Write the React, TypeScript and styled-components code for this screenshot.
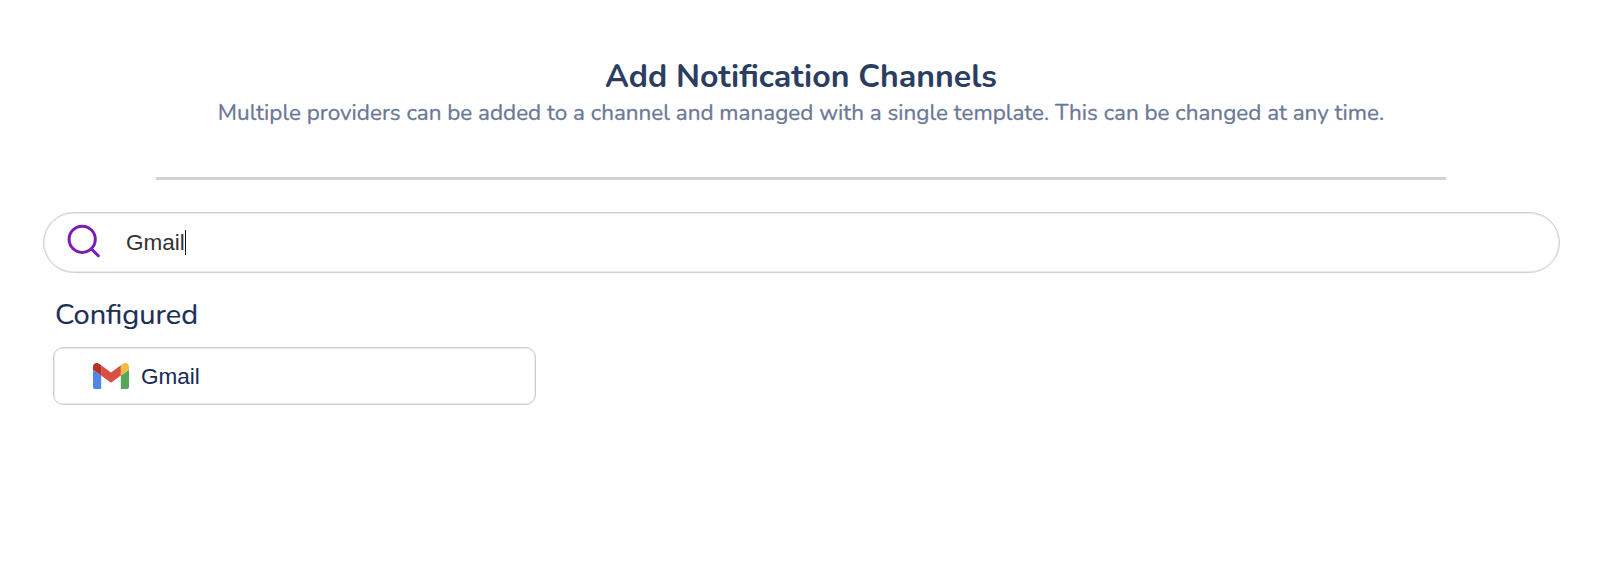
import React from "react";
import styled, { createGlobalStyle } from "styled-components";

const GlobalStyle = createGlobalStyle`
  * { box-sizing: border-box; }
  body { margin: 0; background: #fff; }
`;

const Page = styled.main`
  display: flex;
  flex-direction: column;
  align-items: flex-start;
  min-height: 580px;
  padding: 57px 40px 0 43px;
  background: #fff;
  font-family: Nunito, Lato, sans-serif;
`;

const Header = styled.header`
  display: flex;
  flex-direction: column;
  align-items: center;
  align-self: stretch;
  padding-right: 1px;
  text-align: center;
  white-space: nowrap;
`;

const Title = styled.h1`
  margin: 0;
  font-size: 32.1px;
  line-height: 39px;
  font-weight: 700;
  color: #2b3e61;
`;

const Subtitle = styled.p`
  margin: 0;
  font-size: 22.48px;
  line-height: 34px;
  color: #6b7896;
  -webkit-text-stroke: 0.3px #6b7896;
`;

const Divider = styled.hr`
  width: 1290px;
  height: 3px;
  margin: 47px 0 32px;
  border: 0;
  background: #d2d2d2;
`;

const SearchField = styled.label`
  display: flex;
  align-items: center;
  align-self: stretch;
  height: 61px;
  padding-left: 21px;
  border: 1px solid #cfcfcf;
  border-radius: 31px;
  box-shadow: inset 0 0 0 1px #ebebeb;
`;

const SearchIcon = styled.svg`
  width: 36px;
  height: 36px;
  margin: 0 25px 2px 0;
`;

const Query = styled.span`
  font: 22.5px/26px Arial, "Liberation Sans", sans-serif;
  color: #333;
`;

const Caret = styled.span`
  width: 1px;
  height: 25px;
  background: #111;
`;

const SectionTitle = styled.h2`
  margin: 24px 0 0 12px;
  font-size: 29px;
  line-height: 36px;
  font-weight: 400;
  color: #1c2f55;
  -webkit-text-stroke: 0.2px #1c2f55;
`;

const ProviderCard = styled.button`
  display: flex;
  align-items: center;
  width: 483px;
  height: 58px;
  margin: 14px 0 0 10px;
  padding: 0 0 0 39px;
  border: 1px solid #cfcfcf;
  border-radius: 10px;
  box-shadow: inset 0 0 0 1px #ebebeb;
  background: #fff;
  font: 22.5px/26px Arial, "Liberation Sans", sans-serif;
  color: #172952;
`;

const GmailLogo = styled.svg`
  width: 36px;
  height: 26px;
  margin-right: 12px;
`;

const ProviderName = styled.span`
  padding-top: 1px;
`;

export default function App() {
  return (
    <>
      <GlobalStyle />
      <Page>
        <Header>
          <Title>Add Notification Channels</Title>
          <Subtitle>
            Multiple providers can be added to a channel and managed with a single template. This can be changed at any time.
          </Subtitle>
          <Divider />
        </Header>
        <SearchField>
          <SearchIcon viewBox="0 0 36 36" fill="none" stroke="#7d1bb8" strokeWidth="3" strokeLinecap="round">
            <circle cx="17.2" cy="15.3" r="13.1" />
            <path d="M26.500 25 33.300 31.800" />
          </SearchIcon>
          <Query>Gmail</Query>
          <Caret />
        </SearchField>
        <SectionTitle>Configured</SectionTitle>
        <ProviderCard>
          <GmailLogo viewBox="52 42 88 66" preserveAspectRatio="none">
            <path fill="#4f86ec" d="M58 108h14V74L52 59v43c0 3.32 2.69 6 6 6" />
            <path fill="#58a55c" d="M120 108h14c3.32 0 6-2.69 6-6V59l-20 15" />
            <path fill="#f1bc42" d="M120 48v26l20-15v-8c0-7.42-8.47-11.65-14.4-7.2" />
            <path fill="#d95040" d="M72 74V48l24 18 24-18v26L96 92" />
            <path fill="#b33225" d="M52 51v8l20 15V48l-5.600-4.200c-5.940-4.450-14.400-.220-14.400 7.200" />
          </GmailLogo>
          <ProviderName>Gmail</ProviderName>
        </ProviderCard>
      </Page>
    </>
  );
}
